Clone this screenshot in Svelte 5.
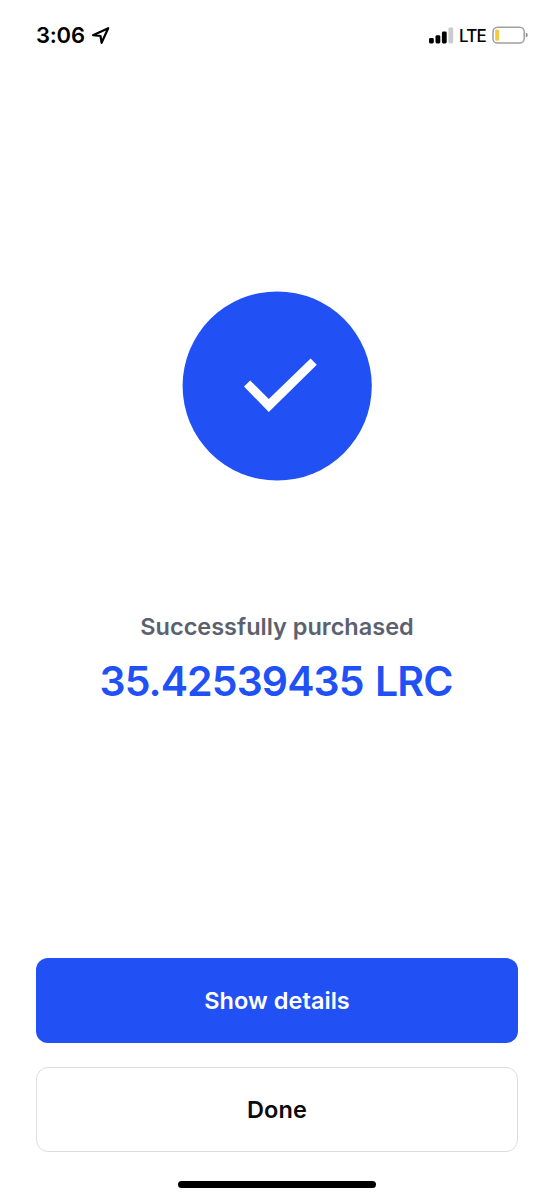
<script>
  const amount = '35.42539435 LRC';
</script>

<main class="screen">
  <header class="status">
    <div class="clock">
      <span class="time">3:06</span>
      <svg class="location" width="20" height="20" viewBox="0 0 20 20" aria-hidden="true">
        <path d="M2 10.2 L17.2 3.2 L10.6 17.8 L9.5 11 Z" />
      </svg>
    </div>
    <div class="indicators">
      <svg class="signal" width="26" height="20" viewBox="0 0 26 20" aria-hidden="true">
        <rect x="1" y="13" width="4.8" height="5.4" rx="1.4" />
        <rect x="7.5" y="10.2" width="4.8" height="8.2" rx="1.4" />
        <rect x="13.9" y="6.5" width="4.8" height="11.9" rx="1.4" />
        <rect class="off" x="20.4" y="2.4" width="4.8" height="16" rx="1.4" />
      </svg>
      <span class="network">LTE</span>
      <svg class="battery" width="36" height="20" viewBox="0 0 36 20" aria-hidden="true">
        <rect class="shell" x="1" y="2.2" width="31.2" height="15.8" rx="4.6" />
        <rect class="level" x="3.2" y="4.4" width="3.9" height="11.4" rx="1.5" />
        <path class="cap" d="M33.8 7.6 Q35.8 8.4 35.8 10.1 Q35.8 11.8 33.8 12.6 Z" />
      </svg>
    </div>
  </header>

  <section class="result">
    <svg class="success" width="190" height="190" viewBox="0 0 190 190" aria-hidden="true">
      <circle cx="95.2" cy="95" r="94.6" />
      <path d="M62 95.6 L68.2 89.4 L86.8 108 L128.6 67.5 L134.8 73.8 L86.8 121 Z" />
    </svg>
    <p class="caption">Successfully purchased</p>
    <h1 class="amount">{amount}</h1>
  </section>

  <footer class="actions">
    <button class="primary">Show details</button>
    <button class="secondary">Done</button>
  </footer>
  <div class="home"></div>
</main>

<style>
  :global(body) {
    background: #fff;
  }
  .screen {
    box-sizing: border-box;
    width: 554px;
    height: 1200px;
    display: flex;
    flex-direction: column;
    background: #fff;
    font-family: Inter, sans-serif;
    overflow: hidden;
  }
  .status {
    box-sizing: border-box;
    height: 70px;
    padding: 25px 26px 0 36px;
    display: flex;
    justify-content: space-between;
    align-items: flex-start;
    color: #000;
  }
  .clock,
  .indicators {
    display: flex;
    align-items: center;
    height: 20px;
  }
  .time {
    font-size: 22px;
    font-weight: 600;
    line-height: 20px;
    letter-spacing: -0.2px;
  }
  .location {
    margin-left: 6px;
    fill: none;
    stroke: #000;
    stroke-width: 2.2;
    stroke-linejoin: round;
  }
  .off {
    fill: #cbcbcd;
  }
  .network {
    margin: 0 6px 0 5px;
    padding-top: 2px;
    font-size: 17px;
    font-weight: 500;
    line-height: 20px;
    letter-spacing: -0.8px;
  }
  .shell {
    fill: none;
    stroke: #a0a0a2;
    stroke-width: 1.5;
  }
  .level {
    fill: #f6c941;
  }
  .cap {
    fill: #8f8f91;
  }
  .result {
    flex: 1;
    display: flex;
    flex-direction: column;
    align-items: center;
    padding-top: 221px;
  }
  .success circle {
    fill: #2151f5;
  }
  .success path {
    fill: #fff;
  }
  .caption {
    margin: 131px 0 0;
    font-size: 23.5px;
    font-weight: 600;
    line-height: 30px;
    color: #5b616e;
  }
  .amount {
    margin: 14px 2px 0 0;
    font-size: 41px;
    font-weight: 600;
    line-height: 50px;
    letter-spacing: -0.9px;
    word-spacing: 2px;
    color: #2151f5;
    white-space: nowrap;
  }
  .actions {
    display: flex;
    flex-direction: column;
    gap: 24px;
    padding: 0 36px;
  }
  button {
    box-sizing: border-box;
    height: 85px;
    width: 482px;
    margin: 0;
    padding: 0;
    border: 0;
    border-radius: 12px;
    font: 600 23.5px/30px Inter, sans-serif;
    letter-spacing: 0.06px;
  }
  .primary {
    background: #2151f5;
    color: #fff;
  }
  .secondary {
    background: #fff;
    border: 1.5px solid #dcdde1;
    color: #0a0b0d;
  }
  .home {
    flex: none;
    width: 198px;
    height: 7px;
    margin: 29px auto 12px;
    border-radius: 4px;
    background: #000;
  }
</style>
